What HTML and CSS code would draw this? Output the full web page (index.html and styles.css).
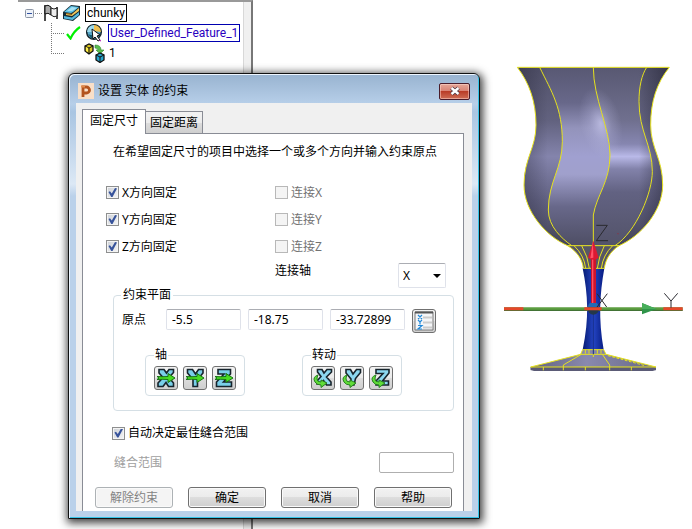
FILE: index.html
```html
<!DOCTYPE html>
<html lang="zh-CN">
<head>
<meta charset="utf-8">
<title>设置 实体 的约束</title>
<link rel="stylesheet" href="styles.css">
</head>
<body>
<main class="workspace">
  <nav class="tree" aria-label="chunky">
    <ul class="tree-list">
      <li class="tree-row root">
        <svg width="18" height="20" viewBox="0 0 18 20"><rect x=".5" y="6.500" width="8" height="8" rx="1" fill="#eef2f8" stroke="#8b95a5"/><path d="M2 10.500H7" stroke="#3050a0"/><path d="M10 10.500H18" stroke="#888" stroke-dasharray="1 1"/></svg>
        <svg class="flag" width="14" height="18" viewBox="0 0 14 18"><path d="M1 1V17M13 3V15" stroke="#111" stroke-width="1.500" fill="none"/><path d="M1 2Q4 0 7 3V11Q4 8 1 10Z" fill="#aaa" stroke="#111"/><path d="M7 4Q10 6 13 4V12Q10 14 7 11Z" fill="#eee" stroke="#222"/></svg>
        <svg class="model" width="18" height="18" viewBox="0 0 18 18"><path d="M0 8L8 1L17 2V11L10 17L0 15Z" fill="#152a35"/><path d="M1 8L8 2L16 3L10 8L8 9Z" fill="#5ec3e6"/><path d="M3 9L9 10L16 4V7L9 12L3 11Z" fill="#efc65b"/><path d="M3 9L9 10V11L3 10Z" fill="#7c5518"/><path d="M1 12L9 13.500L16 8V11L9.500 16L1 14.500Z" fill="#55b9df"/><path d="M4 7L9 3L14 4L9 7Z" fill="#a7e2f4"/></svg>
        <span class="node">chunky</span>
      </li>
      <li class="tree-row child">
        <svg width="14" height="20" viewBox="0 0 14 20"><path d="M.5 0V20M0 10.500H14" stroke="#777" stroke-dasharray="1 1" fill="none"/></svg>
        <svg class="mark" width="15" height="14" viewBox="0 0 15 14"><path d="M1 8L4.500 12.500Q8 5 14 1" fill="none" stroke="#00f000" stroke-width="2.200"/></svg>
        <svg class="feature" width="17" height="18" viewBox="0 0 17 18"><circle cx="8" cy="8" r="7.300" fill="#58a8ca" stroke="#17262d" stroke-width="1.500"/><path d="M8 1A7 7 0 0 0 1 8L8 8Z" fill="#9bd9eb"/><path d="M8 1A7 7 0 0 1 15 8L8 7Z" fill="#efc050"/><path d="M2 10Q8 13 14 9L12 14H5Z" fill="#14586f"/><path d="M6 5L14 11L11 12L14 16L12 17L9 13L7 15Z" fill="#fff" stroke="#111"/><path d="M13 16L15 17" stroke="#a0a"/></svg>
        <span class="node selected">User_Defined_Feature_1</span>
      </li>
      <li class="tree-row child">
        <svg width="14" height="20" viewBox="0 0 14 20"><path d="M.5 0V11M0 10.500H14" stroke="#777" stroke-dasharray="1 1" fill="none"/></svg>
        <svg class="relation" width="21" height="20" viewBox="0 0 21 20"><path d="M1 3L5 1L9 3V8L5 11L1 8Z" fill="#d9c522" stroke="#111" stroke-width="1.300"/><path d="M1 3L5 5L9 3M5 5V11" stroke="#111" fill="none"/><path d="M2 4L4 5V9L2 8Z" fill="#fff04a"/><path d="M11 2Q17 2 17 7H20L16 11L12 7H14Q14 5 11 5Z" fill="#5bbd4f" stroke="#31862f" stroke-width=".600"/><path d="M12 12L16 10L20 12V17L16 19.500L12 17Z" fill="#26a4cb" stroke="#111" stroke-width="1.300"/><path d="M12 12L16 14L20 12M16 14V19" stroke="#111" fill="none"/></svg>
        <span class="node plain">1</span>
      </li>
    </ul>
  </nav>
  <section class="viewport" aria-label="3D">
    <svg class="goblet" width="192" height="330" viewBox="0 0 576 990">
      <defs>
        <linearGradient id="side" x1="0" y1="37" x2="0" y2="572" gradientUnits="userSpaceOnUse"><stop offset="0" stop-color="#515169"/><stop offset=".3" stop-color="#62627f"/><stop offset=".5" stop-color="#8484ac"/><stop offset=".75" stop-color="#606080"/><stop offset="1" stop-color="#444457"/></linearGradient>
        <linearGradient id="mid" x1="0" y1="37" x2="0" y2="572" gradientUnits="userSpaceOnUse"><stop offset="0" stop-color="#585873"/><stop offset=".2" stop-color="#68688a"/><stop offset=".34" stop-color="#9393bb"/><stop offset=".5" stop-color="#a0a0d0"/><stop offset=".6" stop-color="#a0a0cc"/><stop offset=".78" stop-color="#68688a"/><stop offset="1" stop-color="#4e4e64"/></linearGradient>
        <linearGradient id="right" x1="0" y1="37" x2="0" y2="572" gradientUnits="userSpaceOnUse"><stop offset="0" stop-color="#585872"/><stop offset=".3" stop-color="#70708f"/><stop offset=".43" stop-color="#8686b0"/><stop offset=".5" stop-color="#b9b9e8"/><stop offset=".57" stop-color="#8282aa"/><stop offset=".7" stop-color="#626282"/><stop offset="1" stop-color="#535369"/></linearGradient>
        <linearGradient id="shade" x1="52" y1="0" x2="508" y2="0" gradientUnits="userSpaceOnUse"><stop offset="0" stop-color="#222233" stop-opacity=".4"/><stop offset=".2" stop-color="#222233" stop-opacity="0"/><stop offset=".8" stop-color="#222233" stop-opacity="0"/><stop offset="1" stop-color="#222233" stop-opacity=".6"/></linearGradient>
        <linearGradient id="stem" x1="248" y1="0" x2="313" y2="0" gradientUnits="userSpaceOnUse"><stop offset="0" stop-color="#061b72"/><stop offset=".5" stop-color="#2444c2"/><stop offset="1" stop-color="#061b80"/></linearGradient>
        <linearGradient id="foot" x1="90" y1="0" x2="468" y2="0" gradientUnits="userSpaceOnUse"><stop offset="0" stop-color="#62627e"/><stop offset=".45" stop-color="#8989ae"/><stop offset="1" stop-color="#686887"/></linearGradient>
        <radialGradient id="glow"><stop offset="0" stop-color="#d0d0f4" stop-opacity=".65"/><stop offset=".5" stop-color="#c0c0e8" stop-opacity=".25"/><stop offset="1" stop-color="#b8b8e0" stop-opacity="0"/></radialGradient>
        <clipPath id="bowl"><path d="M52 37C88 84 108 140 108 210C108 280 72 310 72 390C72 470 140 545 203 572H357C420 545 488 470 488 390C488 310 452 280 452 210C452 140 470 84 508 37Z"/></clipPath>
      </defs>
      <g clip-path="url(#bowl)">
        <path d="M40 30H520V580H40Z" fill="url(#side)"/>
        <path d="M119 37C155 110 187 160 187 260C187 340 145 380 145 465C145 515 185 550 215 572H280V480C290 420 330 380 330 300C330 220 280 130 280 37Z" fill="url(#mid)"/>
        <path d="M280 37C280 130 330 220 330 300C330 380 290 420 280 480V572H345C410 530 457 410 457 350C457 270 417 230 417 140C417 95 425 60 440 37Z" fill="url(#right)"/>
        <ellipse cx="302" cy="205" rx="62" ry="110" transform="rotate(-14 302 205)" fill="url(#glow)"/>
        <path d="M40 30H520V580H40Z" fill="url(#shade)"/>
      </g>
      <path d="M203 572C232 590 248 615 250 640H313C316 615 330 590 357 572Z" fill="#565666"/>
      <path d="M248 640H313C299 720 295 790 311 884H248C268 790 264 720 248 640Z" fill="url(#stem)"/>
      <path d="M248 884H311L318 898L468 936V946H92V936L242 898Z" fill="url(#foot)"/>
      <path d="M92 936H468V944L458 948H102L92 944Z" fill="#5b5b76"/>
      <g fill="none" stroke="#e6e21e" stroke-width="3">
        <path d="M203 572C140 545 72 470 72 390C72 310 108 280 108 210C108 140 88 84 52 37H508C470 84 452 140 452 210C452 280 488 310 488 390C488 470 420 545 357 572Z"/>
        <path d="M119 37C155 110 187 160 187 260C187 340 145 380 145 465C145 515 185 550 215 572M280 37C280 130 330 220 330 300C330 380 290 420 280 480V572M440 37C425 60 417 95 417 140C417 230 457 270 457 350C457 410 410 530 345 572"/>
        <path d="M203 572C232 590 248 615 250 640H313C316 615 330 590 357 572M222 572Q252 600 257 640M245 572Q264 605 268 640M338 572Q309 600 304 640M313 572Q296 605 292 640"/>
        <path d="M248 884H311L318 898L468 936M248 884L242 898L92 936H468M242 898H318M256 884V896M267 884V896M292 884V896M303 884V896M244 898L190 930V946M280 898V906M307 898L329 930V946M256 936V946M130 936V946M394 936V946"/>
        <path d="M324 902L435 932" stroke-dasharray="8 5"/>
      </g>
      <path d="M280 640V730M280 770V898" stroke="#18318d" stroke-width="3"/>
      <path d="M12 762H548" stroke="#5c9e40" stroke-width="10"/><path d="M12 766H548" stroke="#35662a" stroke-width="3"/>
      <circle cx="280" cy="762" r="17" fill="#24384a"/><path d="M264 756A16 16 0 0 1 296 756Z" fill="#226bb4"/>
      <path d="M12 761H70M253 761H305M490 761H548" stroke="#e5472a" stroke-width="9"/>
      <path d="M426 744L470 762L426 778Z" fill="#30944a"/><path d="M426 744L470 762H426Z" fill="#48ae5a"/>
      <path d="M273 612H288V744H273Z" fill="#cf142c"/><path d="M278 612V744" stroke="#ff5061" stroke-width="4"/>
      <path d="M280 557L296 608Q280 620 264 608Z" fill="#dc1933"/><path d="M279 560L280 608L271 610Z" fill="#ff5268"/>
      <path d="M289 511H322L289 557H324M291 716L320 756M322 716L291 756M493 715L513 738L533 715M513 738V758" fill="none" stroke="#29292f" stroke-width="3"/>
      <circle cx="354" cy="536" r="2" fill="#8b3344"/>
    </svg>
  </section>

  <section class="dialog" role="dialog" aria-labelledby="dialog-title">
    <header class="titlebar">
      <svg width="16" height="16" viewBox="0 0 16 16"><path d="M0 0H16V16H0Z" fill="#f8dfc8"/><path d="M5 14V4H8.500A3 3 0 0 1 8.500 10H6" fill="none" stroke="#b3541e" stroke-width="2.800"/><path d="M3 3.500H7" stroke="#e08b4c" stroke-width="2"/></svg>
      <h1 id="dialog-title">设置 实体 的约束</h1>
      <button class="close" type="button" aria-label="关闭"><svg width="12" height="10" viewBox="0 0 12 10"><path d="M2.500 2L9.500 8M9.500 2L2.500 8" stroke="#4d3740" stroke-width="4"/><path d="M2.500 2L9.500 8M9.500 2L2.500 8" stroke="#fff" stroke-width="2.400"/></svg></button>
    </header>
    <form class="content">
      <div class="tabs" role="tablist">
        <button class="tab active" type="button" role="tab" aria-selected="true">固定尺寸</button>
        <button class="tab" type="button" role="tab" aria-selected="false">固定距离</button>
      </div>
      <div class="page" role="tabpanel">
        <p class="hint">在希望固定尺寸的项目中选择一个或多个方向并输入约束原点</p>
        <div class="options">
          <label class="check"><input type="checkbox" checked>X方向固定</label>
          <label class="check off"><input type="checkbox" disabled>连接X</label>
          <label class="check"><input type="checkbox" checked>Y方向固定</label>
          <label class="check off"><input type="checkbox" disabled>连接Y</label>
          <label class="check"><input type="checkbox" checked>Z方向固定</label>
          <label class="check off"><input type="checkbox" disabled>连接Z</label>
          <div class="axis">
            <label for="axis">连接轴</label>
            <span class="dropdown"><select id="axis"><option>X</option><option>Y</option><option>Z</option></select></span>
          </div>
        </div>
        <fieldset class="group plane">
          <legend>约束平面</legend>
          <div class="origin">
            <label for="origin-x">原点</label>
            <input class="field" id="origin-x" type="text" value="-5.5">
            <input class="field" type="text" aria-label="原点 Y" value="-18.75">
            <input class="field" type="text" aria-label="原点 Z" value="-33.72899">
            <button class="tool" type="button" aria-label="XYZ"><svg width="20" height="20" viewBox="0 0 20 20"><path d="M1 1H19V19H1Z" fill="#f5f6f8" stroke="#777"/><path d="M1 1.500H19" stroke="#555" stroke-width="2"/><path d="M4 4L8 8M8 4L4 8M4 9L6 11L8 9M6 11V13.500M4 14.500H8L4 18H8" fill="none" stroke="#2389d8" stroke-width="1.200"/><path d="M9 6.500H18M9 11.500H18M9 16.500H18" stroke="#ccc" stroke-width="2"/></svg></button>
          </div>
          <div class="toolgroups">
            <fieldset class="group tools">
              <legend>轴</legend>
              <div class="toolrow">
                <button class="tool" type="button" aria-label="X 轴"><svg width="20" height="20" viewBox="0 0 20 20"><path d="M3 1.500H8L10.500 5L13 1.500H17.500V4.500L13 9.500L17.500 15V18.500H12.500L10 14.500L7 18.500H2V15L7 9.500L3 5Z" fill="#79cfe9" stroke="#17242c" stroke-width="1.600"/><path d="M1 8.500Q7 9 12 8.500V5.500L19 10L12 14.500V11.500Q7 11 1 11.500L3 10Z" fill="#48dc22" stroke="#167313"/></svg></button>
                <button class="tool" type="button" aria-label="Y 轴"><svg width="20" height="20" viewBox="0 0 20 20"><path d="M2.500 1.500H7.500L10.500 6L13.500 1.500H18V5L12.500 11.500V18.500H8V11.500L2.500 5Z" fill="#79cfe9" stroke="#17242c" stroke-width="1.600"/><path d="M1 8.500Q7 9 12 8.500V5.500L19 10L12 14.500V11.500Q7 11 1 11.500L3 10Z" fill="#48dc22" stroke="#167313"/></svg></button>
                <button class="tool" type="button" aria-label="Z 轴"><svg width="20" height="20" viewBox="0 0 20 20"><path d="M4 1.500H16.500V6L9.500 14H17.500V18.500H2.500V14L10 6H4Z" fill="#79cfe9" stroke="#17242c" stroke-width="1.600"/><path d="M1 8.500Q7 9 12 8.500V5.500L19 10L12 14.500V11.500Q7 11 1 11.500L3 10Z" fill="#48dc22" stroke="#167313"/></svg></button>
              </div>
            </fieldset>
            <fieldset class="group tools">
              <legend>转动</legend>
              <div class="toolrow">
                <button class="tool" type="button" aria-label="X 转动"><svg width="20" height="20" viewBox="0 0 20 20"><path d="M4.500 1.500H9L11 5L14 1.500H18.500V4L13.500 9L18 14V17H13.500L10.500 12.500L7 16H4V13L8 8.500L4.500 4Z" fill="#8cd8f0" stroke="#17242c" stroke-width="1.600"/><path d="M5 7Q-1 9 2 14Q4 17 8 17V19.500L14 15L8 12V14Q4 14 4 11Q4 9 5 7Z" fill="#60dc38" stroke="#268020"/></svg></button>
                <button class="tool" type="button" aria-label="Y 转动"><svg width="20" height="20" viewBox="0 0 20 20"><path d="M4 1.500H8.500L11 6L14.500 1.500H18.500V4.500L13.500 10.500L12 17H8.500L9 11L4 5Z" fill="#8cd8f0" stroke="#17242c" stroke-width="1.600"/><path d="M5 7Q-1 9 2 14Q4 17 8 17V19.500L14 15L8 12V14Q4 14 4 11Q4 9 5 7Z" fill="#60dc38" stroke="#268020"/></svg></button>
                <button class="tool" type="button" aria-label="Z 转动"><svg width="20" height="20" viewBox="0 0 20 20"><path d="M5 1.500H18V5L11.500 13H17.500V17H5V13L12 5.500H5Z" fill="#8cd8f0" stroke="#17242c" stroke-width="1.600"/><path d="M5 7Q-1 9 2 14Q4 17 8 17V19.500L14 15L8 12V14Q4 14 4 11Q4 9 5 7Z" fill="#60dc38" stroke="#268020"/></svg></button>
              </div>
            </fieldset>
          </div>
        </fieldset>
        <label class="check auto"><input type="checkbox" checked>自动决定最佳缝合范围</label>
        <div class="range">
          <label for="range">缝合范围</label>
          <input class="field" id="range" type="text" disabled>
        </div>
        <div class="actions">
          <button class="push" type="button" disabled>解除约束</button>
          <button class="push" type="button">确定</button>
          <button class="push" type="button">取消</button>
          <button class="push" type="button">帮助</button>
        </div>
      </div>
    </form>
  </section>
</main>
</body>
</html>
```
FILE: styles.css
```css
* { box-sizing: border-box; }

body {
  margin: 0;
  background: #fff;
  color: #000;
  font: 12px/16px "Noto Sans", "Noto Sans CJK SC", sans-serif;
}

button, input, select { font: inherit; color: inherit; margin: 0; }
svg { display: block; flex: none; }

.workspace {
  position: relative;
  display: grid;
  grid-template-columns: 253px 1fr;
  min-height: 100vh;
  overflow: hidden;
}

/* Model tree */
.tree {
  margin-left: 18px;
  border-top: 2px solid #999;
  border-right: 2px solid #777;
  background: linear-gradient(90deg, #d8d8d8 1px, #f0f0f0 1px) right / 8px 100% no-repeat;
  font-family: Roboto, "Liberation Sans", sans-serif;
}
.tree-list { margin: 0; padding: 1px 0 0; list-style: none; }
.tree-row { display: flex; align-items: center; height: 20px; }
.root { padding-left: 7px; }
.child { padding-left: 33px; }
.flag { margin-left: 1px; }
.model { margin: 0 4px 0 5px; }
.mark { margin-left: 1px; }
.feature { margin: 0 5px; }
.relation { margin: 0 2px 0 19px; }
.node { border: 1px solid #000; line-height: 16px; padding: 0 1px; }
.selected { border-color: #0000b0; color: #2a00c0; }
.plain { border-color: transparent; }

/* 3D view */
.viewport { display: flex; justify-content: flex-end; align-items: flex-start; padding-top: 55px; }

/* Floating window */
.dialog {
  position: absolute;
  left: 68px;
  top: 73px;
  width: 412px;
  padding: 0 7px 7px;
  border: 1px solid #111;
  border-radius: 6px 6px 0 0;
  background: linear-gradient(#98b3d0, #b7cfe9 30px, #a9c5e2 38px, #dce8f5 110px, #bad1ea 122px);
  box-shadow: inset 1px 1px #eef6ff, inset -1px -1px #35c4e8, 1px 2px 9px 2px rgba(0, 0, 0, .75);
}
.titlebar { display: flex; align-items: center; height: 29px; padding: 5px 2px 0; }
.titlebar h1 { flex: 1; margin: 0 0 0 4px; font-size: 12px; font-weight: 400; }
.close {
  display: grid;
  place-items: center;
  width: 31px;
  height: 17px;
  padding: 0;
  border: 1px solid #4a1c2a;
  border-radius: 2px;
  background: linear-gradient(#e6a799, #d98374 7px, #b83a25 7px, #cf6d55);
  box-shadow: inset 0 0 0 1px rgba(255, 220, 210, .5);
}
.content { padding: 6px 8px 0 6px; background: #f0f0f0; }

/* Tabs */
.tabs { display: flex; align-items: flex-end; }
.tab {
  height: 22px;
  padding: 0 4px;
  border: 1px solid #898c95;
  border-left: 0;
  border-bottom: 0;
  background: linear-gradient(#f2f2f2, #ebebeb 11px, #ddd 11px, #cfcfcf);
}
.tab.active {
  height: 25px;
  margin-bottom: -1px;
  padding: 0 7px 2px;
  border-left: 1px solid #898c95;
  background: #fff;
  z-index: 1;
}
.page {
  padding: 10px 9px 3px 12px;
  border: 1px solid #898c95;
  border-bottom: 0;
  background: #fff;
}
.hint { margin: 0 0 19px 18px; }

/* Check boxes */
.options { display: grid; grid-template-columns: 169px 1fr; grid-auto-rows: 27px; padding-left: 11px; }
.check { display: flex; align-items: center; gap: 3px; }
.check input {
  appearance: none;
  width: 13px;
  height: 13px;
  border: 1px solid #8e8f8f;
  background: linear-gradient(135deg, #ccd0d6, #f6f6f6);
  box-shadow: inset 0 0 0 1px #f4f4f4;
}
.check input:checked::before {
  content: "";
  display: block;
  width: 9px;
  height: 9px;
  margin: 1px;
  background: #37539b;
  clip-path: polygon(5% 45%, 22% 35%, 42% 60%, 78% 0, 100% 6%, 50% 100%, 36% 100%);
}
.off { color: #737373; }
.check input:disabled { border-color: #b8b8b8; background: #f4f4f4; }
.axis { grid-column: 2; display: flex; justify-content: space-between; padding: 3px 8px 0 0; }
.dropdown { position: relative; }
.dropdown::after {
  content: "";
  position: absolute;
  right: 5px;
  top: 11px;
  border: 4px solid transparent;
  border-top-color: #000;
  border-bottom: 0;
  pointer-events: none;
}
.dropdown select {
  appearance: none;
  width: 48px;
  height: 25px;
  padding: 0 4px;
  border: 1px solid #dfe2ea;
  border-top-color: #abadb3;
  border-radius: 2px;
  background: #fff;
}

/* Group boxes */
.group { min-width: 0; margin: 0; border: 1px solid #d5dfe5; border-radius: 4px; }
.group legend { padding: 0 2px; margin: 0; }
.plane { margin-left: 18px; padding: 6px 7px 14px; }
.origin { display: flex; align-items: flex-start; gap: 7px; padding-left: 1px; }
.origin label { width: 37px; line-height: 22px; }
.field {
  width: 75px;
  height: 21px;
  padding: 0 5px;
  border: 1px solid #dfe2ea;
  border-top-color: #abadb3;
  border-radius: 2px;
  background: #fff;
}
.field:disabled { border-color: #afafaf; }
.toolgroups { display: flex; gap: 57px; margin: 14px 0 0 24px; }
.tools { padding: 3px 8px 5px; }
.tools legend { padding: 0 1px; }
.toolrow { display: flex; gap: 5px; }
.tool {
  display: grid;
  place-items: center;
  width: 24px;
  height: 24px;
  padding: 0;
  border: 1px solid #707070;
  border-radius: 3px;
  background: linear-gradient(#f2f2f2, #ebebeb 50%, #ddd 50%, #cfcfcf);
}

/* Lower rows */
.auto { margin: 14px 0 0 17px; }
.range { display: flex; justify-content: space-between; align-items: center; margin: 11px 0 14px 19px; color: #a0a0a0; }
.actions { display: flex; justify-content: space-between; padding-right: 2px; }
.push {
  width: 78px;
  height: 21px;
  padding: 0;
  border: 1px solid #707070;
  border-radius: 3px;
  line-height: 18px;
  background: linear-gradient(#f2f2f2, #ebebeb 50%, #ddd 50%, #cfcfcf);
  box-shadow: inset 0 0 0 1px #fafafa;
}
.push:disabled { border-color: #adb2b5; background: #f4f4f4; color: #838383; }
```
